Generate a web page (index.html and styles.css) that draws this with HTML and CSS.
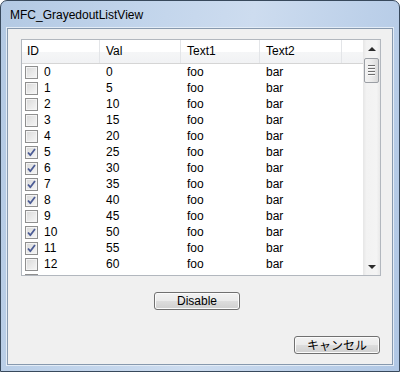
FILE: index.html
```html
<!DOCTYPE html>
<html>
<head>
<meta charset="utf-8">
<link rel="stylesheet" href="styles.css">
</head>
<body>
<div class="window">
  <div class="titlebar"><span class="title">MFC_GrayedoutListView</span></div>
  <div class="client">
    <div class="list">
      <div class="list-main">
        <div class="header">
          <div class="hcell hid">ID</div>
          <div class="hcell">Val</div>
          <div class="hcell">Text1</div>
          <div class="hcell">Text2</div>
          <div class="hcell hfill"></div>
        </div>
        <div class="rows">
          <div class="row"><div class="cell cid"><span class="cb"></span><span>0</span></div><div class="cell">0</div><div class="cell">foo</div><div class="cell">bar</div></div>
          <div class="row"><div class="cell cid"><span class="cb"></span><span>1</span></div><div class="cell">5</div><div class="cell">foo</div><div class="cell">bar</div></div>
          <div class="row"><div class="cell cid"><span class="cb"></span><span>2</span></div><div class="cell">10</div><div class="cell">foo</div><div class="cell">bar</div></div>
          <div class="row"><div class="cell cid"><span class="cb"></span><span>3</span></div><div class="cell">15</div><div class="cell">foo</div><div class="cell">bar</div></div>
          <div class="row"><div class="cell cid"><span class="cb"></span><span>4</span></div><div class="cell">20</div><div class="cell">foo</div><div class="cell">bar</div></div>
          <div class="row"><div class="cell cid"><span class="cb"><svg width="11" height="11" viewBox="0 0 11 11"><path class="tick" d="M2 5.5 L4.3 8.2 L9 2"/></svg></span><span>5</span></div><div class="cell">25</div><div class="cell">foo</div><div class="cell">bar</div></div>
          <div class="row"><div class="cell cid"><span class="cb"><svg width="11" height="11" viewBox="0 0 11 11"><path class="tick" d="M2 5.5 L4.3 8.2 L9 2"/></svg></span><span>6</span></div><div class="cell">30</div><div class="cell">foo</div><div class="cell">bar</div></div>
          <div class="row"><div class="cell cid"><span class="cb"><svg width="11" height="11" viewBox="0 0 11 11"><path class="tick" d="M2 5.5 L4.3 8.2 L9 2"/></svg></span><span>7</span></div><div class="cell">35</div><div class="cell">foo</div><div class="cell">bar</div></div>
          <div class="row"><div class="cell cid"><span class="cb"><svg width="11" height="11" viewBox="0 0 11 11"><path class="tick" d="M2 5.5 L4.3 8.2 L9 2"/></svg></span><span>8</span></div><div class="cell">40</div><div class="cell">foo</div><div class="cell">bar</div></div>
          <div class="row"><div class="cell cid"><span class="cb"></span><span>9</span></div><div class="cell">45</div><div class="cell">foo</div><div class="cell">bar</div></div>
          <div class="row"><div class="cell cid"><span class="cb"><svg width="11" height="11" viewBox="0 0 11 11"><path class="tick" d="M2 5.5 L4.3 8.2 L9 2"/></svg></span><span>10</span></div><div class="cell">50</div><div class="cell">foo</div><div class="cell">bar</div></div>
          <div class="row"><div class="cell cid"><span class="cb"><svg width="11" height="11" viewBox="0 0 11 11"><path class="tick" d="M2 5.5 L4.3 8.2 L9 2"/></svg></span><span>11</span></div><div class="cell">55</div><div class="cell">foo</div><div class="cell">bar</div></div>
          <div class="row"><div class="cell cid"><span class="cb"></span><span>12</span></div><div class="cell">60</div><div class="cell">foo</div><div class="cell">bar</div></div>
          <div class="row"><div class="cell cid"><span class="cb"></span></div><div class="cell"></div><div class="cell"></div><div class="cell"></div></div>
        </div>
      </div>
      <div class="vscroll">
        <div class="sbtn"><span class="arrow-up"></span></div>
        <div class="thumb"><span class="grip"></span><span class="grip"></span><span class="grip"></span><span class="grip"></span></div>
        <div class="track"></div>
        <div class="sbtn"><span class="arrow-down"></span></div>
      </div>
    </div>
    <div class="btnrow"><button class="btn btn-disable">Disable</button></div>
    <div class="btnrow-right"><button class="btn btn-cancel">キャンセル</button></div>
  </div>
</div>
</body>
</html>
```
FILE: styles.css
```css
html, body {
  margin: 0;
  padding: 0;
  width: 400px;
  height: 372px;
  overflow: hidden;
  background: #ffffff;
}
.window {
  box-sizing: border-box;
  width: 400px;
  height: 372px;
  border: 1px solid #38495c;
  border-radius: 7px 7px 0 0;
  background: linear-gradient(100deg, #b3c9e3 0%, #c1d4eb 30%, #cddcef 55%, #bcd0e9 80%, #b0c7e4 100%);
  display: flex;
  flex-direction: column;
  padding: 0 6px 6px 6px;
  font-family: "Liberation Sans", Arial, sans-serif;
}
.titlebar {
  height: 27px;
  display: flex;
  align-items: center;
  padding-left: 3px;
}
.title {
  font-size: 12px;
  color: #000;
  margin-top: 1px;
}
.client {
  flex: 1;
  box-sizing: border-box;
  background: #f0f0f0;
  border: 1px solid #8799ae;
  box-shadow: 0 0 0 1px #e3ecf6;
  display: flex;
  flex-direction: column;
  padding: 10px 11px 0 13px;
}
.list {
  box-sizing: border-box;
  width: 360px;
  height: 237px;
  border: 1px solid #b2b7be;
  background: #fff;
  display: flex;
}
.list-main {
  width: 341px;
  overflow: hidden;
}
.header {
  display: grid;
  grid-template-columns: 78px 81px 79px 82px 21px;
  height: 24px;
  background: linear-gradient(#ffffff 0%, #ffffff 50%, #f5f6f7 51%, #f1f2f4 100%);
  border-bottom: 1px solid #d5d5d5;
  box-sizing: border-box;
}
.hcell {
  font-size: 12px;
  color: #000;
  padding-left: 6px;
  line-height: 23px;
  border-right: 1px solid #e3e5e8;
}
.hid { padding-left: 5px; }
.hfill { border-right: none; }
.rows {
  height: 211px;
  overflow: hidden;
}
.row {
  display: grid;
  grid-template-columns: 78px 81px 79px 82px;
  height: 16px;
  align-items: center;
}
.cell {
  font-size: 12px;
  color: #000;
  padding-left: 6px;
  white-space: nowrap;
  line-height: 16px;
  height: 16px;
}
.cell.cid {
  padding-left: 3px;
  display: flex;
  align-items: center;
  gap: 6px;
}
.cb {
  box-sizing: border-box;
  width: 13px;
  height: 13px;
  border: 1px solid #8f8f8f;
  background: linear-gradient(135deg, #d8d8d8 0%, #e8e8e8 50%, #f6f6f6 100%);
  box-shadow: inset 0 0 0 1px #f4f4f4;
  display: flex;
  align-items: center;
  justify-content: center;
}
.cb svg { display: block; }
.tick {
  fill: none;
  stroke: #4c5c95;
  stroke-width: 1.8;
  stroke-linejoin: round;
}
.vscroll {
  width: 17px;
  background: linear-gradient(90deg, #e6e6e6 0%, #f2f2f2 20%, #f4f4f4 80%, #e9e9e9 100%);
  display: flex;
  flex-direction: column;
}
.sbtn {
  height: 17px;
  display: flex;
  align-items: center;
  justify-content: center;
}
.arrow-up {
  width: 0; height: 0;
  border-left: 4px solid transparent;
  border-right: 4px solid transparent;
  border-bottom: 4px solid #2b2b2b;
}
.arrow-down {
  width: 0; height: 0;
  border-left: 4px solid transparent;
  border-right: 4px solid transparent;
  border-top: 4px solid #2b2b2b;
}
.thumb {
  box-sizing: border-box;
  margin: 1px 1px 0 1px;
  height: 25px;
  border: 1px solid #9b9fa5;
  border-radius: 2px;
  background: linear-gradient(90deg, #f3f3f3 0%, #ebebeb 50%, #dadada 100%);
  display: flex;
  flex-direction: column;
  align-items: center;
  justify-content: center;
  gap: 1px;
}
.grip {
  width: 7px;
  height: 1px;
  background: #6e6e6e;
  border-bottom: 1px solid #fafafa;
}
.track { flex: 1; }
.btnrow {
  padding-left: 133px;
  margin-top: 15px;
}
.btnrow-right {
  display: flex;
  justify-content: flex-end;
  margin-top: 26px;
  padding-right: 1px;
}
.btn {
  box-sizing: border-box;
  width: 86px;
  height: 18px;
  padding: 0;
  border: 1px solid #707070;
  border-radius: 3px;
  background: linear-gradient(#f2f2f2 0%, #ebebeb 48%, #dddddd 52%, #cfcfcf 100%);
  box-shadow: inset 0 0 0 1px #fbfbfb;
  font-family: "Liberation Sans", Arial, "Noto Sans CJK JP", sans-serif;
  font-size: 12px;
  color: #000;
  line-height: 16px;
}
.btn-cancel {
  font-family: "Noto Sans CJK JP", sans-serif;
  font-size: 12px;
}
```
